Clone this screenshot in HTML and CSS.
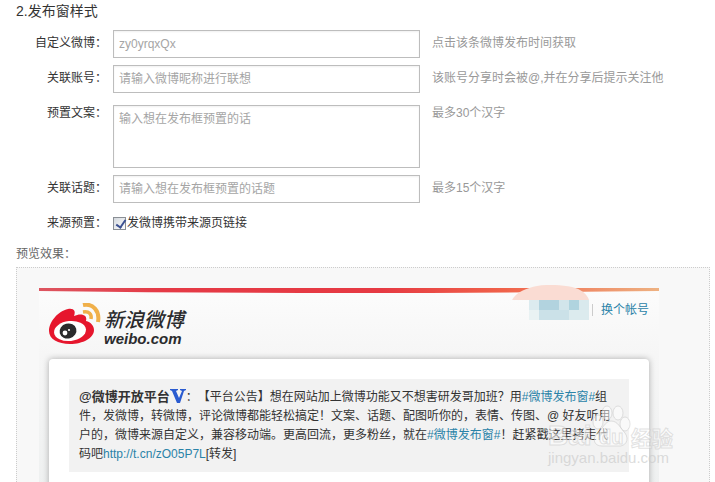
FILE: index.html
```html
<!DOCTYPE html>
<html lang="zh-CN">
<head>
<meta charset="UTF-8">
<meta name="viewport" content="width=device-width, initial-scale=1.0">
<title>发布窗样式</title>
<link rel="stylesheet" href="styles.css">
</head>
<body>

<h2 class="title">2.发布窗样式</h2>

<form class="settings">
  <label class="label" for="weiboId">自定义微博：</label>
  <input class="field" type="text" id="weiboId" placeholder="zy0yrqxQx">
  <span class="hint">点击该条微博发布时间获取</span>

  <label class="label" for="account">关联账号：</label>
  <input class="field" type="text" id="account" placeholder="请输入微博昵称进行联想">
  <span class="hint">该账号分享时会被@,并在分享后提示关注他</span>

  <label class="label" for="copy">预置文案：</label>
  <textarea class="field area" id="copy" placeholder="输入想在发布框预置的话"></textarea>
  <span class="hint">最多30个汉字</span>

  <label class="label" for="topic">关联话题：</label>
  <input class="field" type="text" id="topic" placeholder="请输入想在发布框预置的话题">
  <span class="hint">最多15个汉字</span>

  <span class="label">来源预置：</span>
  <label class="check"><input type="checkbox" checked>发微博携带来源页链接</label>
</form>

<p class="preview-title">预览效果：</p>

<div class="preview">
  <div class="window">
    <svg class="ribbon" height="5" preserveAspectRatio="none" viewBox="0 0 620 5">
      <defs>
        <linearGradient id="bar">
          <stop offset="0" stop-color="#dd5560"/>
          <stop offset="0.2" stop-color="#e53a46"/>
          <stop offset="0.55" stop-color="#e63a43"/>
          <stop offset="0.75" stop-color="#f0624a"/>
          <stop offset="1" stop-color="#eeb282"/>
        </linearGradient>
      </defs>
      <path fill="url(#bar)" d="M0 0H620V3Q310 7 0 3Z"/>
    </svg>

    <div class="head">
      <div class="brand">
        <svg width="52" height="42" viewBox="0 0 52 42">
          <path fill="#e6162d" d="M0 28C0 19 9 8 19 6C25 5 27 8 25 13C31 10 39 11 37 18C42 19 45 23 45 27C45 35 34 41 21 41C9 41 0 36 0 28Z"/>
          <ellipse cx="21" cy="28" rx="16" ry="10" fill="#fff" transform="rotate(-6 21 28)"/>
          <ellipse cx="19" cy="28" rx="8.5" ry="7.5" fill="#2b2b2d" transform="rotate(-15 19 28)"/>
          <circle cx="16" cy="30" r="2.4" fill="#fff"/>
          <circle cx="20" cy="27" r="1.1" fill="#fff"/>
          <path fill="none" stroke="#f0b04a" stroke-width="4" d="M34 2C44 0 51 8 49 19"/>
          <path fill="none" stroke="#f0b04a" stroke-width="3.5" d="M34 9C40 8 43 11 42 16"/>
        </svg>
        <div class="brand-text">
          <span class="brand-cn">新浪微博</span>
          <span class="brand-en">weibo.com</span>
        </div>
      </div>
      <div class="user">
        <svg class="masked" width="77" height="35" viewBox="0 0 77 35" shape-rendering="crispEdges">
          <path fill="#fadcd3" shape-rendering="auto" d="M0 15C4 7 15 3 25 1C36 -1 50 0 60 2C69 4 75 9 77 15Z"/>
          <path fill="#dcebef" d="M17 15h10v10h-10z"/>
          <path fill="#b2d3df" d="M27 15h20v10h-20z"/>
          <path fill="#d2e5eb" d="M47 15h10v10h-10z"/>
          <path fill="#b0d4df" d="M57 15h10v10h-10z"/>
          <path fill="#d9e9ed" d="M67 15h10v10h-10z"/>
          <path fill="#e9f2f3" d="M17 25h10v10h-10z"/>
          <path fill="#cbe1e8" d="M27 25h30v10h-30z"/>
          <path fill="#dcebee" d="M57 25h20v10h-20z"/>
        </svg>
        <a class="switch" href="#">换个帐号</a>
      </div>
    </div>

    <div class="card">
      <p class="post"><b>@微博开放平台</b><svg class="vip" width="16" height="14" viewBox="0 0 16 14"><path fill="#2a5bd0" d="M0 0H8V1L6 2L9 9L12 2L10 1V0H16V1L14 2L10 14H7L2 2L0 1Z"/></svg>：【平台公告】想在网站加上微博功能又不想害研发哥加班？用<a href="#">#微博发布窗#</a>组<br>件，发微博，转微博，评论微博都能轻松搞定！文案、话题、配图听你的，表情、传图、@ 好友听用<br>户的，微博来源自定义，兼容移动端。更高回流，更多粉丝，就在<a href="#">#微博发布窗#</a>！赶紧戳这里拷走代<br>码吧<a href="#">http://t.cn/zO05P7L</a>[转发]</p>
      <svg class="watermark" width="132" height="66" viewBox="0 0 132 66">
        <g fill="#fff" fill-opacity="0.5" stroke="#c4c4c4" stroke-opacity="0.5">
          <text x="1" y="41" class="mark-name">Bai</text>
          <ellipse cx="51" cy="18" rx="5" ry="7"/>
          <ellipse cx="60" cy="9" rx="5" ry="7"/>
          <ellipse cx="71" cy="9" rx="5" ry="7"/>
          <ellipse cx="78" cy="20" rx="5" ry="7"/>
          <path d="M64 17C71 17 73 24 78 29C83 36 78 43 71 42H55C47 42 45 35 50 30C55 26 58 17 64 17Z"/>
          <text x="52" y="40" class="mark-du">du</text>
          <text x="84" y="42" class="mark-cn">经验</text>
        </g>
        <text x="1" y="59" class="mark-url">jingyan.baidu.com</text>
      </svg>
    </div>
  </div>
</div>

</body>
</html>
```
FILE: styles.css
```css
* {
  box-sizing: border-box;
}

body {
  margin: 0;
  padding: 0 5px 0 16px;
  min-height: 100vh;
  display: flex;
  flex-direction: column;
  background: #fff;
  color: #333;
  font: 12px/24px "Liberation Sans", "Noto Sans CJK SC", sans-serif;
  text-spacing-trim: space-all;
}

a {
  color: #2a83a8;
  text-decoration: none;
}

.title {
  margin: 0 0 8px;
  font-size: 14px;
  line-height: 22px;
  font-weight: normal;
}

/* settings form */
.settings {
  display: grid;
  grid-template-columns: 91px 307px 1fr;
  column-gap: 6px;
  row-gap: 7px;
  align-items: start;
  line-height: 26px;
}

.label {
  text-align: right;
}

.field {
  width: 100%;
  height: 28px;
  padding: 0 5px;
  border: 1px solid #bdbdbd;
  border-radius: 0;
  background: #fff;
  box-shadow: inset 0 1px 2px #f0f0f0;
  color: #333;
  font: inherit;
}

.field::placeholder {
  color: #a5a5a5;
}

.area {
  display: block;
  height: 63px;
  margin-top: 5px;
  resize: none;
}

.hint {
  padding-left: 6px;
  color: #999;
}

.check {
  display: flex;
  align-items: center;
  gap: 1px;
}

.check input {
  appearance: none;
  width: 13px;
  height: 13px;
  margin: 0;
  border: 1px solid #8a8f95;
  background: linear-gradient(135deg, #d3d8de, #fff);
}

/* tick of the checkbox */
.check input:checked::after {
  content: "";
  display: block;
  width: 4px;
  height: 8px;
  margin-left: 4px;
  border: solid #3c5192;
  border-width: 0 2px 2px 0;
  transform: rotate(35deg);
}

.preview-title {
  margin: 6px 0 1px;
  color: #666;
}

/* preview */
.preview {
  flex: 1;
  display: flex;
  padding: 20px 22px 0;
  border: 1px dotted #ccc;
  border-bottom: 0;
  background: #f8f8f8;
}

.window {
  flex: 1;
  max-width: 620px;
  display: flex;
  flex-direction: column;
  background: linear-gradient(#fcfcfc, #f6f6f6 66px, #eef0f0);
}

.ribbon {
  display: block;
  width: 100%;
}

.head {
  display: flex;
  justify-content: space-between;
  height: 66px;
  padding: 0 10px;
}

.brand {
  display: flex;
  gap: 3px;
  padding-top: 10px;
}

.brand-text {
  display: flex;
  flex-direction: column;
  padding-top: 6px;
  color: #2b2b2d;
  font-style: italic;
  font-weight: 500;
}

.brand-cn {
  font-size: 20px;
  line-height: 22px;
}

.brand-en {
  font-size: 15px;
  line-height: 16px;
  font-weight: bold;
}

.user {
  display: flex;
  align-items: flex-start;
}

.masked {
  position: relative;
  top: -8px;
}

.switch {
  margin: 11px 0 0 3px;
  padding-left: 8px;
  border-left: 1px solid #ccc;
  line-height: 12px;
}

.card {
  flex: 1;
  position: relative;
  margin: 0 10px;
  padding: 20px;
  border-radius: 4px 4px 0 0;
  background: #fff;
  box-shadow: 0 0 6px #aaa;
}

.post {
  margin: 0;
  padding: 9px 10px 8px;
  background: #f2f2f2;
  line-height: 19px;
  white-space: nowrap;
}

.post b {
  font-size: 13px;
  line-height: 1;
}

.vip {
  vertical-align: -2px;
}

.watermark {
  position: absolute;
  top: 45px;
  right: -30px;
}

.mark-name {
  font: bold 28px "Liberation Sans", sans-serif;
}

.mark-du {
  font: bold 20px "Liberation Sans", sans-serif;
}

.mark-cn {
  font: bold 21px "Noto Sans CJK SC", sans-serif;
}

.mark-url {
  font: 15px "Liberation Sans", sans-serif;
  fill: #ccc;
  fill-opacity: 0.7;
}
```
